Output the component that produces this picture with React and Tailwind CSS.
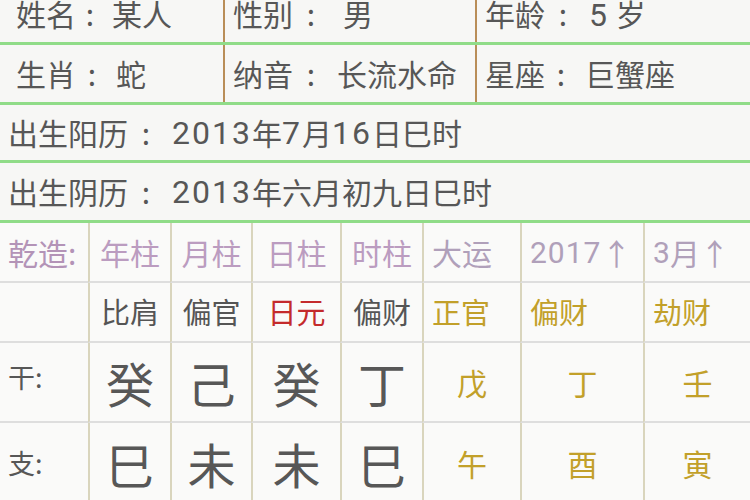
import React from 'react'

const pillars = [
  { head: '年柱', god: '比肩', gan: '癸', zhi: '巳' },
  { head: '月柱', god: '偏官', gan: '己', zhi: '未' },
  { head: '日柱', god: '日元', gan: '癸', zhi: '未', red: true },
  { head: '时柱', god: '偏财', gan: '丁', zhi: '巳' },
]

const luck = [
  { head: '大运', god: '正官', gan: '戊', zhi: '午' },
  { head: <><span className="tracking-[1px]" style={{ fontFamily: 'Roboto, sans-serif' }}>2017</span>↑</>, god: '偏财', gan: '丁', zhi: '酉' },
  { head: <><span style={{ fontFamily: 'Roboto, sans-serif' }}>3</span>月↑</>, god: '劫财', gan: '壬', zhi: '寅' },
]

const cjk = { fontFamily: '"Noto Sans CJK SC", sans-serif' }
const cell = 'flex items-center border-l-2 border-[#d9d5bd]'

// 冒号：居中，两侧留白
const Colon = ({ w = 'w-[44px]' }) => (
  <span className={`inline-block ${w} pr-[8px] text-center`}>:</span>
)

// 数字用 Roboto，略大
const Num = ({ children }) => (
  <span className="text-[32px] tracking-[2px]" style={{ fontFamily: 'Roboto, sans-serif' }}>
    {children}
  </span>
)

const App = () => {
  return (
    <div className="w-[750px] h-[500px] overflow-hidden bg-[#f7f7f5] text-[#575757]" style={cjk}>
      {/* 基本信息 */}
      <div className="flex h-[45px] border-b-[3px] border-[#90dc88] text-[30px] leading-[30px]">
        <div className="w-[223px] pl-[16px] -mt-[2px] whitespace-nowrap">
          姓名<Colon w="w-[36px]" />某人
        </div>
        <div className="w-[252px] pl-[8px] -mt-[2px] whitespace-nowrap border-l-2 border-[#b98e58]">
          性别<Colon /><span className="ml-[6px]">男</span>
        </div>
        <div className="flex-1 pl-[8px] -mt-[2px] whitespace-nowrap border-l-2 border-[#b98e58]">
          年龄<Colon /><Num>5</Num> 岁
        </div>
      </div>
      <div className="flex h-[60px] border-b-[3px] border-[#90dc88] text-[30px]">
        <div className="w-[223px] pl-[16px] flex items-center whitespace-nowrap">
          生肖<Colon w="w-[40px]" />蛇
        </div>
        <div className="w-[252px] pl-[8px] flex items-center whitespace-nowrap border-l-2 border-[#b98e58]">
          纳音<Colon />长流水命
        </div>
        <div className="flex-1 pl-[8px] flex items-center whitespace-nowrap border-l-2 border-[#b98e58]">
          星座<Colon w="w-[40px]" />巨蟹座
        </div>
      </div>
      <div className="flex items-center h-[58px] pl-[8px] text-[30px] whitespace-nowrap border-b-[3px] border-[#90dc88]">
        出生阳历<Colon /><Num>2013</Num>年<Num>7</Num>月<Num>16</Num>日巳时
      </div>
      <div className="flex items-center h-[60px] pl-[8px] text-[30px] whitespace-nowrap border-b-[3px] border-[#90dc88]">
        出生阴历<Colon /><Num>2013</Num>年六月初九日巳时
      </div>

      {/* 八字排盘 */}
      <div className="grid grid-cols-[88px_82px_81px_89px_82px_98px_123px_107px] grid-rows-[60px_60px_80px_80px] bg-[#fafaf9]">
        {/* 表头 */}
        <div className="flex items-center pl-[8px] text-[30px] text-[#b393b7] border-b-2 border-[#dedede]">乾造:</div>
        {pillars.map((p) => (
          <div key={p.head} className={`${cell} justify-center text-[30px] text-[#bb9cc0] border-b-2 border-b-[#dedede]`}>
            {p.head}
          </div>
        ))}
        {luck.map((p, i) => (
          <div key={i} className={`${cell} pl-[8px] text-[30px] text-[#b0a0ba] border-b-2 border-b-[#dedede]`}>
            {p.head}
          </div>
        ))}

        {/* 十神 */}
        <div className="border-b-2 border-[#dedede]" />
        {pillars.map((p) => (
          <div
            key={p.head}
            className={`${cell} justify-center text-[29px] border-b-2 border-b-[#dedede] ${p.red ? 'text-[#c42a2c]' : 'text-[#555555]'}`}
          >
            {p.god}
          </div>
        ))}
        {luck.map((p, i) => (
          <div key={i} className={`${cell} pl-[8px] text-[29px] text-[#c2a02a] border-b-2 border-b-[#dedede]`}>
            {p.god}
          </div>
        ))}

        {/* 干 */}
        <div className="flex items-center pl-[8px] pb-[10px] text-[27px] border-b-2 border-[#dedede]">干:</div>
        {pillars.map((p) => (
          <div key={p.head} className={`${cell} justify-center text-[48px] border-b-2 border-b-[#dedede]`}>
            {p.gan}
          </div>
        ))}
        {luck.map((p, i) => (
          <div key={i} className={`${cell} justify-center text-[30px] text-[#c2a02a] border-b-2 border-b-[#dedede]`}>
            {p.gan}
          </div>
        ))}

        {/* 支 */}
        <div className="flex items-center pl-[8px] text-[27px]">支:</div>
        {pillars.map((p) => (
          <div key={p.head} className={`${cell} justify-center text-[48px]`}>
            {p.zhi}
          </div>
        ))}
        {luck.map((p, i) => (
          <div key={i} className={`${cell} justify-center text-[30px] text-[#c2a02a]`}>
            {p.zhi}
          </div>
        ))}
      </div>
    </div>
  )
}

export default App
